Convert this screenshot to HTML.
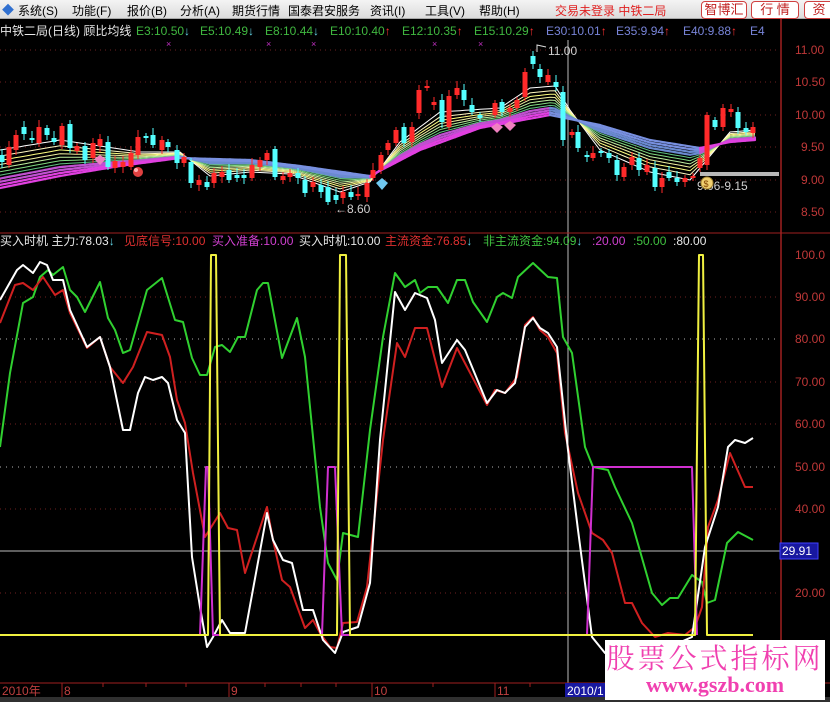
<!DOCTYPE html>
<html><head><meta charset="utf-8">
<style>
*{margin:0;padding:0;box-sizing:border-box}
body{width:830px;height:702px;background:#000;overflow:hidden;position:relative;font-family:"Liberation Sans","Noto Sans CJK SC",sans-serif;font-size:12px}
.menu{position:absolute;left:0;top:0;width:830px;height:19px;background:linear-gradient(#f4f4f4,#dcdcdc);border-bottom:1px solid #aaa}
.menu span{position:absolute;top:2px;color:#000;font-size:12px;white-space:nowrap}
.btn{position:absolute;top:1px;height:18px;border:1px solid #d04040;border-radius:4px;background:#fff;color:#c02020;font-size:13px;text-align:center;line-height:16px}
.t{position:absolute;white-space:nowrap;font-size:12px;line-height:14px}
.ax{position:absolute;left:795px;color:#c03838;font-size:12px;line-height:12px}
.wm{position:absolute;left:605px;top:640px;width:220px;height:60px;background:#fff;text-align:center;color:#f040b0}
</style></head><body>
<div class="menu">
<span style="left:2px;top:1px;color:#3070d0">◆</span>
<span style="left:18px">系统(S)</span><span style="left:72px">功能(F)</span><span style="left:127px">报价(B)</span><span style="left:180px">分析(A)</span><span style="left:232px">期货行情</span><span style="left:288px">国泰君安服务</span><span style="left:370px">资讯(I)</span><span style="left:425px">工具(V)</span><span style="left:479px">帮助(H)</span>
<span style="left:555px;color:#e02020">交易未登录 中铁二局</span>
</div>
<div class="btn" style="left:701px;width:46px">智博汇</div>
<div class="btn" style="left:751px;width:48px">行 情</div>
<div class="btn" style="left:804px;width:30px">资</div>

<div class="t" style="left:0;top:24px;color:#e8e8e8">中铁二局(日线) 顾比均线</div>
<div class="t" style="left:136px;top:24px;color:#40b840">E3:10.50<span style="color:#60d0e0">↓</span></div>
<div class="t" style="left:200px;top:24px;color:#40b840">E5:10.49<span style="color:#60d0e0">↓</span></div>
<div class="t" style="left:265px;top:24px;color:#40b840">E8:10.44<span style="color:#60d0e0">↓</span></div>
<div class="t" style="left:330px;top:24px;color:#40b840">E10:10.40<span style="color:#ff3030">↑</span></div>
<div class="t" style="left:402px;top:24px;color:#40b840">E12:10.35<span style="color:#ff3030">↑</span></div>
<div class="t" style="left:474px;top:24px;color:#40b840">E15:10.29<span style="color:#ff3030">↑</span></div>
<div class="t" style="left:546px;top:24px;color:#7884d8">E30:10.01<span style="color:#ff3030">↑</span></div>
<div class="t" style="left:616px;top:24px;color:#7884d8">E35:9.94<span style="color:#ff3030">↑</span></div>
<div class="t" style="left:683px;top:24px;color:#7884d8">E40:9.88<span style="color:#ff3030">↑</span></div>
<div class="t" style="left:750px;top:24px;color:#7884d8">E4</div>

<svg id="s" width="830" height="702" style="position:absolute;left:0;top:0" xmlns="http://www.w3.org/2000/svg">
<g stroke="#702020" stroke-dasharray="1,4" stroke-width="1">
<line x1="0" y1="50" x2="780" y2="50"/><line x1="0" y1="82" x2="780" y2="82"/><line x1="0" y1="115" x2="780" y2="115"/><line x1="0" y1="147" x2="780" y2="147"/><line x1="0" y1="180" x2="780" y2="180"/><line x1="0" y1="212" x2="780" y2="212"/>
<line x1="0" y1="297" x2="780" y2="297"/><line x1="0" y1="382" x2="780" y2="382"/><line x1="0" y1="424" x2="780" y2="424"/><line x1="0" y1="509" x2="780" y2="509"/><line x1="0" y1="593" x2="780" y2="593"/>
</g>
<g stroke="#b0b0b0" stroke-dasharray="1,5"><line x1="0" y1="339" x2="780" y2="339"/><line x1="0" y1="467" x2="780" y2="467"/></g>
<line x1="0" y1="551" x2="780" y2="551" stroke="#bdbdbd"/>
<line x1="568" y1="40" x2="568" y2="697" stroke="#bdbdbd"/>
<line x1="781" y1="19" x2="781" y2="697" stroke="#a02020" stroke-width="1.5"/>
<line x1="0" y1="233" x2="830" y2="233" stroke="#a02020"/>
<line x1="0" y1="683" x2="830" y2="683" stroke="#a02020"/>
<g stroke="#a02020"><line x1="62" y1="683" x2="62" y2="697"/><line x1="229" y1="683" x2="229" y2="697"/><line x1="372" y1="683" x2="372" y2="697"/><line x1="495" y1="683" x2="495" y2="697"/><line x1="103" y1="683" x2="103" y2="687"/><line x1="146" y1="683" x2="146" y2="687"/><line x1="186" y1="683" x2="186" y2="687"/><line x1="265" y1="683" x2="265" y2="687"/><line x1="301" y1="683" x2="301" y2="687"/><line x1="336" y1="683" x2="336" y2="687"/><line x1="433" y1="683" x2="433" y2="687"/><line x1="530" y1="683" x2="530" y2="687"/></g>
<g id="fan"></g><g id="cd"></g>
<rect x="700" y="172" width="79" height="4" fill="#b8b8b8"/>
<g font-size="12" fill="#d0d0d0" font-family="Liberation Sans,sans-serif">
<text x="335" y="213">←8.60</text><text x="697" y="190">9.06-9.15</text><text x="548" y="55">11.00</text>
</g>
<polyline points="537,52 537,45 546,47" fill="none" stroke="#ddd"/>
<circle cx="707" cy="183" r="6" fill="#f0d070" stroke="#a08030"/><text x="703.5" y="187" font-size="9" fill="#804000">$</text>
<path d="M94,159 l6,-4 6,4 -6,6z" fill="#f080c0"/>
<circle cx="138" cy="172" r="5" fill="#e04040"/><circle cx="136" cy="170" r="2" fill="#ffb0b0"/>
<path d="M376,183 l6,-5 6,5 -6,7z" fill="#70c8f0"/>
<path d="M491,127 l6,-4 6,4 -6,6z" fill="#f080c0"/><path d="M504,125 l6,-4 6,4 -6,6z" fill="#f080c0"/>
<g fill="#c030c0" font-size="9"><text x="166" y="47">×</text><text x="266" y="47">×</text><text x="311" y="47">×</text><text x="432" y="47">×</text><text x="478" y="47">×</text></g>

<g fill="none" stroke-width="2" stroke-linejoin="round">
<polyline stroke="#30d030" points="0,447 10,373 23,303 33,297 40,277 48,270 53,275 63,267 70,290 77,297 85,312 100,282 108,318 115,330 123,353 130,350 147,290 162,278 175,320 183,322 192,358 200,375 207,375 215,347 222,345 230,352 238,337 245,337 257,290 263,283 268,283 282,358 297,318 305,357 320,507 328,563 337,580 343,533 358,537 370,430 383,337 395,273 405,287 415,280 420,293 428,287 437,287 448,303 457,280 465,280 473,302 487,322 497,297 503,293 512,298 518,277 533,263 548,277 557,278 563,337 572,353 585,447 593,467 608,470 615,487 632,523 652,593 662,605 670,598 678,598 692,575 702,582 707,603 715,600 727,543 738,532 753,540"/>
<polyline stroke="#d02020" points="0,323 15,285 23,283 33,290 43,277 55,295 63,290 70,313 87,348 100,337 110,367 123,383 133,367 147,332 162,335 170,357 177,400 185,423 193,473 205,537 220,513 228,528 237,530 245,573 267,507 273,540 282,580 290,587 305,628 313,620 320,633 330,647 337,648 343,623 357,622 367,587 383,440 397,343 405,357 415,328 427,328 442,387 457,348 487,405 495,390 505,393 517,377 525,325 533,317 540,330 548,337 557,353 565,433 578,493 592,533 603,540 612,553 625,603 632,603 642,623 655,637 668,633 685,635 695,627 702,607 708,527 718,500 730,453 745,487 753,487"/>
<polyline stroke="#ffffff" points="0,300 17,270 23,265 33,273 40,262 47,265 53,280 63,280 70,310 87,347 100,337 110,367 123,430 130,430 138,393 145,377 153,380 162,377 168,383 177,420 185,433 192,557 200,607 207,647 213,637 222,620 230,633 245,633 267,513 273,540 283,560 292,563 303,610 313,610 323,640 335,653 343,632 358,627 370,583 380,440 395,292 405,310 415,293 427,298 435,320 442,363 457,340 465,350 487,403 497,390 505,393 515,383 525,327 533,318 540,328 548,333 557,347 568,450 578,530 592,637 605,653 640,660 692,637 705,547 718,507 728,447 735,440 745,443 753,438"/>
<polyline stroke="#d030d0" points="0,635 200,635 206,467 208,467 213,635 322,635 328,467 335,467 342,635 587,635 593,467 692,467 697,635"/>
<polyline stroke="#f0f040" points="0,635 208,635 211,255 216,255 220,635 337,635 340,255 346,255 350,635 695,635 699,255 703,255 707,635 753,635"/>
</g>
<rect x="780" y="543" width="38" height="16" fill="#1818a0" stroke="#4040ff"/>
<text x="782" y="555" fill="#fff" font-size="12" font-family="Liberation Sans,sans-serif">29.91</text>
<rect x="565" y="683" width="40" height="14" fill="#1818a0"/>
<rect x="0" y="697" width="830" height="5" fill="#303030"/>
</svg>

<div class="ax" style="top:44px">11.00</div><div class="ax" style="top:76px">10.50</div><div class="ax" style="top:109px">10.00</div><div class="ax" style="top:141px;left:801px">9.50</div><div class="ax" style="top:174px;left:801px">9.00</div><div class="ax" style="top:206px;left:801px">8.50</div>
<div class="ax" style="top:249px">100.0</div><div class="ax" style="top:291px">90.00</div><div class="ax" style="top:333px">80.00</div><div class="ax" style="top:376px">70.00</div><div class="ax" style="top:418px">60.00</div><div class="ax" style="top:461px">50.00</div><div class="ax" style="top:503px">40.00</div><div class="ax" style="top:587px">20.00</div>

<div class="t" style="left:0;top:234px;color:#e8e8e8">买入时机 主力:78.03<span style="color:#60d0e0">↓</span></div>
<div class="t" style="left:124px;top:234px;color:#e03030">见底信号:10.00</div>
<div class="t" style="left:212px;top:234px;color:#d040d0">买入准备:10.00</div>
<div class="t" style="left:299px;top:234px;color:#e8e8e8">买入时机:10.00</div>
<div class="t" style="left:385px;top:234px;color:#e03030">主流资金:76.85<span style="color:#60d0e0">↓</span></div>
<div class="t" style="left:483px;top:234px;color:#40c040">非主流资金:94.09<span style="color:#60d0e0">↓</span></div>
<div class="t" style="left:592px;top:234px;color:#d040d0">:20.00</div>
<div class="t" style="left:633px;top:234px;color:#40c040">:50.00</div>
<div class="t" style="left:673px;top:234px;color:#e8e8e8">:80.00</div>

<div class="t" style="left:2px;top:684px;color:#c04040">2010年</div>
<div class="t" style="left:64px;top:684px;color:#c04040">8</div>
<div class="t" style="left:231px;top:684px;color:#c04040">9</div>
<div class="t" style="left:374px;top:684px;color:#c04040">10</div>
<div class="t" style="left:497px;top:684px;color:#c04040">11</div>
<div class="t" style="left:567px;top:684px;color:#fff">2010/1</div>

<div class="wm"><div style="font-family:'Noto Serif CJK SC','Noto Sans CJK SC',serif;font-size:28px;line-height:34px;letter-spacing:3px">股票公式指标网</div><div style="font-family:'Liberation Serif',serif;font-size:22px;line-height:22px;font-weight:bold">www.gszb.com</div></div>

<script>
var NS="http://www.w3.org/2000/svg";
function el(p,t,a){var e=document.createElementNS(NS,t);for(var k in a)e.setAttribute(k,a[k]);p.appendChild(e);return e;}
var S=[[0,150],[60,140],[140,152],[180,152],[210,176],[250,172],[290,174],[340,192],[370,182],[400,142],[440,112],[500,108],[530,88],[555,86],[570,110],[600,150],[650,172],[690,180],[705,162],[730,132],[755,130]];
var L=[[0,188],[60,176],[120,166],[180,158],[250,160],[300,166],[370,176],[420,150],[480,128],[550,115],[600,125],[650,140],[700,148],[730,142],[755,140]];
function f(a,x){for(var i=0;i<a.length-1;i++){if(x<=a[i+1][0]){var t=(x-a[i][0])/(a[i+1][0]-a[i][0]);return a[i][1]+t*(a[i+1][1]-a[i][1]);}}return a[a.length-1][1];}
var cols=["#ffffff","#fff8c0","#ffff80","#f0f0a0","#c0f0a0","#80d880","#60c080"];
var fan=document.getElementById("fan");
function yAt(t,x){var s=f(S,x),l=f(L,x);return s+(l-s)*Math.pow(t,0.8);}
for(var j=0;j<cols.length;j++){var t=j/(cols.length+3);var pts=[];for(var x=0;x<=755;x+=5){pts.push(x+","+yAt(t,x).toFixed(1));}
el(fan,"polyline",{points:pts.join(" "),fill:"none",stroke:cols[j],"stroke-width":1});}
for(var k=0;k<4;k++){var t=(cols.length+k)/(cols.length+3);
for(var x=0;x<755;x+=5){var l0=f(L,x),l1=f(L,x+5);var up=l1<l0-0.05;
el(fan,"line",{x1:x,y1:yAt(t,x).toFixed(1),x2:x+5,y2:yAt(t,x+5).toFixed(1),stroke:up?(k<2?"#c050d0":"#e040e0"):(k<2?"#6a8ad0":"#7890e0"),"stroke-width":2.2,"stroke-linecap":"round"});}}
var C=[[2,155,162,0],[9,147,165,1],[16,135,150,1],[24,127,134,0],[32,138,140,0],[39,127,143,1],[47,128,135,0],[54,138,142,0],[62,126,145,1],[70,124,148,0],[77,146,151,1],[85,146,160,0],[93,143,158,1],[100,139,146,1],[108,142,167,0],[115,161,168,1],[123,162,167,1],[131,153,167,1],[138,137,155,1],[146,136,138,0],[153,135,145,0],[162,140,150,1],[168,142,147,0],[177,150,163,0],[184,157,163,1],[191,162,183,0],[199,180,185,1],[207,182,187,0],[214,173,183,1],[222,172,177,1],[229,170,180,0],[237,175,178,0],[244,175,178,0],[252,165,178,1],[260,160,167,1],[267,153,160,1],[275,149,177,0],[283,176,180,1],[290,173,177,1],[298,173,178,0],[305,180,193,0],[313,182,187,1],[321,185,192,0],[328,187,202,0],[336,195,200,0],[343,192,198,1],[351,192,197,0],[358,194,196,1],[367,183,197,1],[373,170,178,1],[381,155,170,1],[388,143,150,1],[396,130,143,1],[404,127,143,0],[412,127,142,1],[419,90,113,1],[427,86,88,1],[434,102,105,1],[442,100,122,0],[449,96,127,1],[457,88,95,1],[464,90,100,0],[472,105,112,0],[480,115,118,0],[495,103,115,1],[502,102,112,0],[510,108,112,1],[517,100,108,1],[525,72,97,1],[533,56,64,0],[540,69,77,0],[548,75,82,1],[556,82,87,0],[563,92,140,0],[572,132,135,1],[578,132,148,0],[587,155,157,0],[593,153,158,1],[601,151,153,0],[609,153,158,0],[617,160,175,0],[624,167,177,1],[632,157,165,1],[639,158,170,0],[647,165,172,1],[655,168,187,0],[662,178,187,1],[669,172,178,0],[677,178,182,0],[685,178,182,1],[693,176,178,1],[700,158,168,1],[707,115,165,1],[715,120,127,0],[723,108,127,1],[731,109,112,1],[738,112,128,0],[746,128,132,0],[753,127,133,1]];
var cd=document.getElementById("cd");
C.forEach(function(c){var col=c[3]?"#ff2a2a":"#54ffff";var w=(c[0]*7)%11;
el(cd,"line",{x1:c[0],x2:c[0],y1:c[1]-3-(w%5),y2:c[2]+3+(w%4),stroke:col,"stroke-width":1});
el(cd,"rect",{x:c[0]-2.5,y:c[1],width:5,height:Math.max(1,c[2]-c[1]),fill:col});});
</script>
</body></html>
